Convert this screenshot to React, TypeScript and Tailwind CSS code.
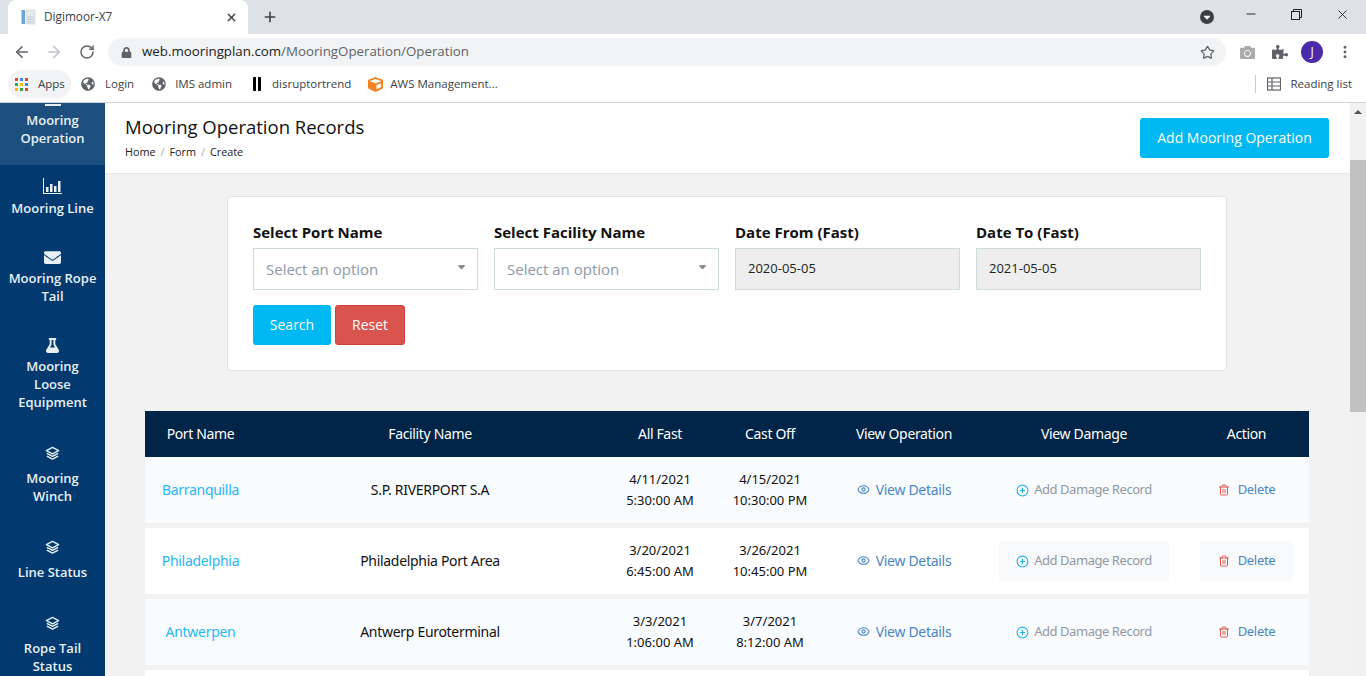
import { ArrowLeft, ArrowRight, RotateCw, Star, Plus, X, Minus, Eye, CirclePlus, Trash2, MoreVertical } from "lucide-react";
import { FaEnvelope, FaFlask, FaLock, FaCamera, FaPuzzlePiece, FaGlobeAmericas, FaCube } from "react-icons/fa";
import { FaCaretDown } from "react-icons/fa6";

const LayersIcon = () => (
    <svg width="15" height="15" viewBox="0 0 16 16" fill="none" stroke="#e8eff6" strokeWidth="1.5" strokeLinejoin="round">
        <path d="M8 1.5 14.5 5 8 8.5 1.5 5Z" />
        <path d="M2 7.8 8 11 14 7.8" />
        <path d="M2 10.8 8 14 14 10.8" />
    </svg>
);

const ChartIcon = () => (
    <svg width="19" height="16" viewBox="0 0 19 16" fill="#e8eff6">
        <path d="M0 0h1v15h19v1H0Z" />
        <rect x="3" y="9" width="2.5" height="5" />
        <rect x="7" y="6" width="2.5" height="8" />
        <rect x="11" y="8" width="2.5" height="6" />
        <rect x="15" y="3" width="2.5" height="11" />
    </svg>
);

const sideItems = [
    { label: ["Mooring", "Operation"], icon: <div className="w-[16px] h-[16px] border-b-2 border-[#e8eff6]" />, height: "h-[88px]", top: "pt-[13px]", gap: "mb-[5px]", active: true },
    { label: ["Mooring Line"], icon: <ChartIcon />, height: "h-[70px]", top: "pt-[13px]", gap: "mb-[5px]", active: false },
    { label: ["Mooring Rope", "Tail"], icon: <FaEnvelope size={17} />, height: "h-[88px]", top: "pt-[14px]", gap: "mb-[4px]", active: false },
    { label: ["Mooring", "Loose", "Equipment"], icon: <FaFlask size={15} />, height: "h-[112px]", top: "pt-[14px]", gap: "mb-[4px]", active: false },
    { label: ["Mooring", "Winch"], icon: <LayersIcon />, height: "h-[94px]", top: "pt-[10px]", gap: "mb-[8px]", active: false },
    { label: ["Line Status"], icon: <LayersIcon />, height: "h-[76px]", top: "pt-[10px]", gap: "mb-[8px]", active: false },
    { label: ["Rope Tail", "Status"], icon: <LayersIcon />, height: "h-[88px]", top: "pt-[10px]", gap: "mb-[8px]", active: false },
];

const rows = [
    { port: "Barranquilla", facility: "S.P. RIVERPORT S.A", fast: ["4/11/2021", "5:30:00 AM"], cast: ["4/15/2021", "10:30:00 PM"], bg: "bg-[#f9fcff]", btn: "bg-[#f9fbfd]" },
    { port: "Philadelphia", facility: "Philadelphia Port Area", fast: ["3/20/2021", "6:45:00 AM"], cast: ["3/26/2021", "10:45:00 PM"], bg: "bg-white", btn: "bg-[#f8f9fb]" },
    { port: "Antwerpen", facility: "Antwerp Euroterminal", fast: ["3/3/2021", "1:06:00 AM"], cast: ["3/7/2021", "8:12:00 AM"], bg: "bg-[#f9fcff]", btn: "bg-[#f9fbfd]" },
];

const colClass = "grid grid-cols-[111px_348px_112px_108px_160px_200px_125px] items-center text-center";

const bookmarks = [
    { label: "Login", icon: <FaGlobeAmericas size={14} className="text-[#5f6368]" />, box: "ml-[10px] gap-[10px]" },
    { label: "IMS admin", icon: <FaGlobeAmericas size={14} className="text-[#5f6368]" />, box: "ml-[18px] gap-[9px]" },
    { label: "disruptortrend", icon: <div className="w-[8px] h-[14px] bg-white rounded-[1px] border-x-[3px] border-black" />, box: "ml-[21px] gap-[11px]" },
    { label: "AWS Management...", icon: <FaCube size={15} className="text-[#f58220]" />, box: "ml-[17px] gap-[7px]" },
];

const App = () => {
    return (
        <div className="h-[676px] w-[1366px] overflow-hidden flex flex-col bg-white font-['Open_Sans',sans-serif]">
            {/* Tab strip */}
            <div className="h-[34px] bg-[#dee1e6] flex items-center shrink-0">
                <div className="ml-[8px] w-[240px] h-[34px] bg-white rounded-t-lg flex items-center pl-[13px] pr-[10px]">
                    <svg width="15" height="16" viewBox="0 0 15 16" className="mr-[8px]">
                        <rect x="0.5" y="1" width="3.5" height="14" fill="#6ba6d8" />
                        <rect x="5" y="1" width="9" height="14" fill="#e6e9ec" stroke="#c9ced3" strokeWidth="0.6" />
                        <path d="M6.5 8h6M6.5 10.5h6M6.5 13h6" stroke="#b3bac0" strokeWidth="0.8" />
                    </svg>
                    <span className="text-[11.8px] text-[#3c4043] flex-1">Digimoor-X7</span>
                    <X size={13} strokeWidth={2.5} className="text-[#3c4043]" />
                </div>
                <Plus size={16} strokeWidth={2.4} className="ml-[14px] text-[#3c4043]" />
                <div className="flex-1" />
                <div className="w-[14px] h-[14px] rounded-full bg-[#3c4043] flex items-center justify-center mr-[30px]">
                    <FaCaretDown size={10} className="text-white" />
                </div>
                <div className="flex items-center gap-[33px] mb-[6px] mr-[16px] text-[#202124]">
                    <Minus size={14} strokeWidth={1.6} />
                    <svg width="11" height="11" viewBox="0 0 11 11" fill="none" stroke="currentColor" strokeWidth="1">
                        <rect x="0.5" y="2.5" width="8" height="8" fill="#dee1e6" />
                        <path d="M2.5 2.5V.5h8v8H8.5" />
                    </svg>
                    <X size={15} strokeWidth={1.4} />
                </div>
            </div>

            {/* Toolbar */}
            <div className="h-[34px] flex items-center shrink-0 pt-[2px]">
                <ArrowLeft size={18} strokeWidth={2.2} className="ml-[13px] text-[#5f6368]" />
                <ArrowRight size={18} strokeWidth={2.2} className="ml-[14px] text-[#bdc1c6]" />
                <RotateCw size={16} strokeWidth={2.2} className="ml-[16px] text-[#5f6368]" />
                <div className="ml-[13px] w-[1118px] h-[28px] rounded-full bg-[#f1f3f4] flex items-center pl-[13px] pr-[11px]">
                    <FaLock size={11} className="text-[#5f6368] mr-[10px]" />
                    <span className="text-[13.3px] text-[#202124]">web.mooringplan.com</span>
                    <span className="text-[13.3px] text-[#5f6368]">/MooringOperation/Operation</span>
                    <div className="flex-1" />
                    <Star size={15} strokeWidth={2} className="text-[#5f6368]" />
                </div>
                <FaCamera size={15} className="ml-[14px] text-[#a9abad]" />
                <FaPuzzlePiece size={16} className="ml-[17px] text-[#5f6368]" />
                <div className="ml-[13px] w-[22px] h-[22px] rounded-full bg-[#4a2aa8] text-white text-[12px] flex items-center justify-center">J</div>
                <MoreVertical size={16} strokeWidth={2.4} className="ml-[14px] text-[#5f6368]" />
            </div>

            {/* Bookmarks */}
            <div className="h-[35px] flex items-center border-b border-[#d2d3d4] shrink-0 pb-[2px]">
                <div className="ml-[8px] h-[28px] w-[63px] rounded-full bg-[#f1f3f4] flex items-center pl-[7px] gap-[10px]">
                    <div className="grid grid-cols-3 gap-[2px]">
                        {["bg-[#ea4335]", "bg-[#4285f4]", "bg-[#ea4335]", "bg-[#34a853]", "bg-[#fbbc05]", "bg-[#4285f4]", "bg-[#fbbc05]", "bg-[#34a853]", "bg-[#ea4335]"].map((c, i) => (
                            <div key={i} className={`w-[3px] h-[3px] ${c}`} />
                        ))}
                    </div>
                    <span className="text-[11.5px] text-[#3c4043]">Apps</span>
                </div>
                <div className="flex items-center">
                    {bookmarks.map((b) => (
                        <div key={b.label} className={`flex items-center ${b.box}`}>
                            {b.icon}
                            <span className="text-[11.5px] text-[#3c4043]">{b.label}</span>
                        </div>
                    ))}
                </div>
                <div className="flex-1" />
                <div className="w-px h-[18px] bg-[#c8c9ca] mr-[11px]" />
                <svg width="14" height="14" viewBox="0 0 14 14" fill="none" stroke="#5f6368" strokeWidth="1.2" className="mr-[9px]">
                    <rect x="0.5" y="1" width="13" height="12" />
                    <path d="M0.5 5h13M0.5 9h13M5 1v12" />
                </svg>
                <span className="text-[11.5px] text-[#3c4043] mr-[14px]">Reading list</span>
            </div>

            {/* Page */}
            <div className="flex-1 flex min-h-0">
                <aside className="w-[105px] shrink-0 bg-[#023a6f] overflow-hidden text-[#e8eff6]">
                    <div className="-mt-[26px]">
                        {sideItems.map((item, i) => (
                            <div key={i} className={`${item.height} ${item.top} ${item.active ? "bg-[#1d4f7e]" : ""} text-center`}>
                                <div className={`h-[16px] flex justify-center items-center ${item.gap}`}>{item.icon}</div>
                                {item.label.map((l) => (
                                    <div key={l} className="text-[13px] leading-[18px] font-semibold">{l}</div>
                                ))}
                            </div>
                        ))}
                    </div>
                </aside>

                <main className="flex-1 bg-[#f2f2f2] overflow-hidden min-w-0">
                    <div className="h-[71px] bg-white border-b border-[#e7e7e7] flex items-center justify-between pl-[20px] pr-[21px]">
                        <div className="-mt-[2px]">
                            <h1 className="text-[18.5px] leading-[24px] font-medium text-[#111]">Mooring Operation Records</h1>
                            <div className="text-[10.8px] leading-[16px] mt-[5px] text-[#222] flex gap-[5px]">
                                <span>Home</span>
                                <span className="text-[#aaa]">/</span>
                                <span>Form</span>
                                <span className="text-[#aaa]">/</span>
                                <span>Create</span>
                            </div>
                        </div>
                        <button className="w-[189px] h-[40px] bg-[#00b9f2] rounded-[3px] text-white text-[14px] mt-[-1px]">Add Mooring Operation</button>
                    </div>

                    {/* Filter card */}
                    <div className="mt-[22px] ml-[122px] w-[1000px] h-[175px] bg-white border border-[#e2e5e7] rounded-[4px] pt-[25px] pl-[25px]">
                        <div className="flex gap-[16px]">
                            {["Select Port Name", "Select Facility Name"].map((l) => (
                                <div key={l} className="w-[225px]">
                                    <div className="text-[15px] leading-[21px] font-bold text-[#111] mb-[5px]">{l}</div>
                                    <div className="h-[42px] border border-[#cfdadb] flex items-center justify-between pl-[12px] pr-[10px] text-[15px] text-[#8e98a8]">
                                        <span>Select an option</span>
                                        <FaCaretDown size={11} className="text-[#888] -mt-[5px]" />
                                    </div>
                                </div>
                            ))}
                            {[["Date From (Fast)", "2020-05-05"], ["Date To (Fast)", "2021-05-05"]].map(([l, v]) => (
                                <div key={l} className="w-[225px]">
                                    <div className="text-[15px] leading-[21px] font-bold text-[#111] mb-[5px]">{l}</div>
                                    <div className="h-[42px] border border-[#cfdadb] bg-[#eeeeee] flex items-center pl-[12px] text-[13px] text-[#222]">{v}</div>
                                </div>
                            ))}
                        </div>
                        <div className="flex gap-[4px] mt-[15px]">
                            <button className="w-[78px] h-[40px] pb-[2px] bg-[#00b9f2] rounded-[3px] text-white text-[14px]">Search</button>
                            <button className="w-[70px] h-[40px] pb-[2px] bg-[#d9534f] border border-[#d43f3a] rounded-[3px] text-white text-[14px]">Reset</button>
                        </div>
                    </div>

                    {/* Table */}
                    <div className="mt-[40px] ml-[40px] w-[1164px] font-['Noto_Sans',sans-serif] text-[14px]">
                        <div className={`${colClass} h-[46px] pb-[2px] bg-[#012549] text-white tracking-[-0.35px]`}>
                            {["Port Name", "Facility Name", "All Fast", "Cast Off", "View Operation", "View Damage", "Action"].map((h) => (
                                <div key={h}>{h}</div>
                            ))}
                        </div>
                        {rows.map((r) => (
                            <div key={r.port} className={`${colClass} h-[66px] mb-[5px] ${r.bg} text-[#111]`}>
                                <div className="text-[#29b6f6] tracking-[-0.3px] pb-[2px]">{r.port}</div>
                                <div className="tracking-[-0.3px] pb-[2px]">{r.facility}</div>
                                <div className="text-[13px] leading-[21px]">{r.fast[0]}<br />{r.fast[1]}</div>
                                <div className="text-[13px] leading-[21px]">{r.cast[0]}<br />{r.cast[1]}</div>
                                <div className="flex items-center justify-center gap-[6px] text-[#4a86c5] tracking-[-0.3px] pb-[2px]">
                                    <Eye size={13} strokeWidth={2} />
                                    <span>View Details</span>
                                </div>
                                <div className="flex justify-center">
                                    <div className={`w-[170px] h-[41px] rounded-[4px] ${r.btn} flex items-center justify-center gap-[5px] text-[13px] text-[#9099a5] tracking-[-0.45px]`}>
                                        <CirclePlus size={13} strokeWidth={2} className="text-[#1fb1ee]" />
                                        <span>Add Damage Record</span>
                                    </div>
                                </div>
                                <div className="flex justify-center">
                                    <div className={`w-[93px] h-[41px] rounded-[4px] ${r.btn} flex items-center justify-center gap-[8px] text-[13px] text-[#4a86c5] tracking-[-0.3px]`}>
                                        <Trash2 size={12} strokeWidth={2} className="text-[#e2574f]" />
                                        <span>Delete</span>
                                    </div>
                                </div>
                            </div>
                        ))}
                        <div className="h-[40px] bg-white" />
                    </div>
                </main>

                {/* Scrollbar */}
                <div className="w-[16px] shrink-0 bg-[#f1f1f1] flex flex-col items-center">
                    <div className="mt-[7px] w-0 h-0 border-x-[4px] border-x-transparent border-b-[4px] border-b-[#505050]" />
                    <div className="mt-[46px] w-full h-[252px] bg-[#c1c1c1]" />
                </div>
            </div>
        </div>
    );
};

export default App;
